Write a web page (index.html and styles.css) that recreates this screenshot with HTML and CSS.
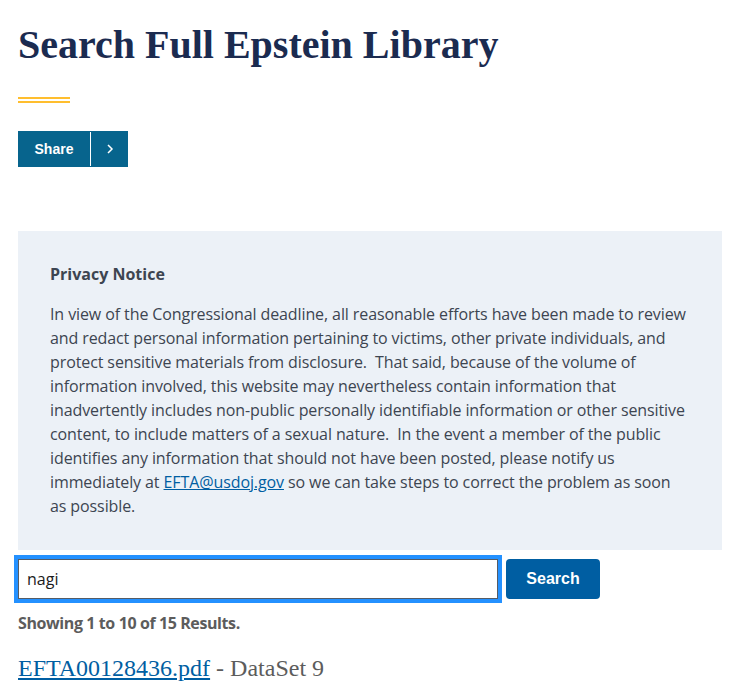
FILE: index.html
```html
<!DOCTYPE html>
<html lang="en">
<head>
<meta charset="utf-8">
<title>Search Full Epstein Library</title>
<link rel="stylesheet" href="styles.css">
</head>
<body>
<main class="page">
  <h1 class="title">Search Full Epstein Library</h1>
  <div class="rule"></div>
  <div class="share">
    <span class="share-label">Share</span>
    <span class="share-arrow">
      <svg width="10" height="12" viewBox="0 0 10 12"><path d="M3 2 L7 6 L3 10" fill="none" stroke="#fff" stroke-width="1.5"/></svg>
    </span>
  </div>
  <section class="notice">
    <h2 class="notice-title">Privacy Notice</h2>
    <p class="notice-text">In view of the Congressional deadline, all reasonable efforts have been made to review and redact personal information pertaining to victims, other private individuals, and protect sensitive materials from disclosure.&nbsp; That said, because of the volume of information involved, this website may nevertheless contain information that inadvertently includes non-public personally identifiable information or other sensitive content, to include matters of a sexual nature.&nbsp; In the event a member of the public identifies any information that should not have been posted, please notify us immediately at <a href="#" class="mail">EFTA@usdoj.gov</a> so we can take steps to correct the problem as soon as possible.</p>
  </section>
  <form class="search">
    <input class="search-input" type="text" value="nagi">
    <button class="search-btn" type="button">Search</button>
  </form>
  <p class="count">Showing 1 to 10 of 15 Results.</p>
  <h3 class="result"><a href="#" class="result-link">EFTA00128436.pdf</a> - DataSet 9</h3>
</main>
</body>
</html>
```

FILE: styles.css
```css
html, body {
  margin: 0;
  padding: 0;
  background: #fff;
}
.page {
  width: 704px;
  padding: 0 12px 0 18px;
  font-family: "Open Sans", "Noto Sans", sans-serif;
}
.title {
  margin: 0;
  padding-top: 22px;
  font-family: "Liberation Serif", serif;
  font-weight: 700;
  font-size: 40px;
  line-height: 46px;
  color: #1b2b50;
}
.rule {
  width: 52px;
  height: 2px;
  margin-top: 29px;
  border-top: 2px solid #ffbe2e;
  border-bottom: 2px solid #ffbe2e;
}
.share {
  display: flex;
  width: 110px;
  height: 36px;
  margin-top: 28px;
  background: #07648d;
  color: #fff;
}
.share-label {
  width: 72px;
  display: flex;
  align-items: center;
  justify-content: center;
  font-family: "Liberation Sans", sans-serif;
  font-weight: 700;
  font-size: 14px;
  border-right: 1px solid #fff;
  margin: 1px 0;
}
.share-arrow {
  flex: 1;
  display: flex;
  align-items: center;
  justify-content: center;
}
.notice {
  margin-top: 64px;
  background: #ecf1f7;
  padding: 32px 32px 32px 32px;
  color: #3d4551;
}
.notice-title {
  margin: 0;
  font-size: 16px;
  font-weight: 700;
  line-height: 22px;
}
.notice-text {
  margin: 17px 0 0;
  font-size: 16px;
  line-height: 24px;
  letter-spacing: -0.1px;
}
.mail {
  color: #005ea2;
}
.search {
  display: flex;
  align-items: center;
  gap: 8px;
  margin-top: 9px;
}
.search-input {
  box-sizing: border-box;
  width: 480px;
  height: 40px;
  margin: 0;
  padding: 0 8px;
  border: 1px solid #565c65;
  outline: 4px solid #2491ff;
  font-family: "Open Sans", sans-serif;
  font-size: 16px;
  color: #1b1b1b;
}
.search-btn {
  width: 94px;
  height: 40px;
  border: 0;
  border-radius: 4px;
  background: #005ea2;
  color: #fff;
  font-family: "Liberation Sans", sans-serif;
  font-weight: 700;
  font-size: 16px;
}
.count {
  margin: 13px 0 0;
  font-size: 16px;
  font-weight: 700;
  line-height: 22px;
  color: #5c5c5c;
  letter-spacing: -0.4px;
}
.result {
  margin: 19px 0 0;
  font-family: "Liberation Serif", serif;
  font-weight: 400;
  font-size: 24px;
  line-height: 30px;
  color: #5c5c5c;
}
.result-link {
  color: #005ea2;
}
```
